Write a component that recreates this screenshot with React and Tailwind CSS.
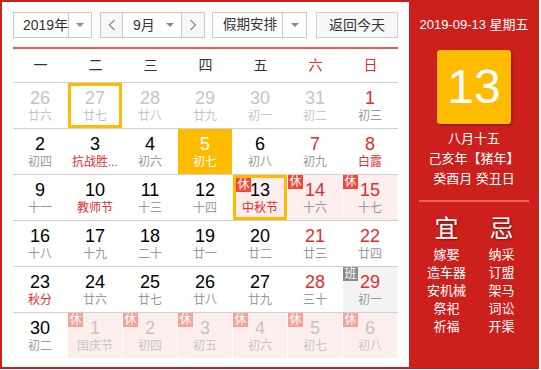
import React from "react"

const weeks = ["一", "二", "三", "四", "五", "六", "日"]

// other = prev/next month, rest = 休, work = 班
const rows = [
  [
    { d: 26, l: "廿六", other: true },
    { d: 27, l: "廿七", other: true, hover: true },
    { d: 28, l: "廿八", other: true },
    { d: 29, l: "廿九", other: true },
    { d: 30, l: "初一", other: true },
    { d: 31, l: "初二", other: true },
    { d: 1, l: "初三" },
  ],
  [
    { d: 2, l: "初四" },
    { d: 3, l: "抗战胜...", fest: true },
    { d: 4, l: "初六" },
    { d: 5, l: "初七", today: true },
    { d: 6, l: "初八" },
    { d: 7, l: "初九" },
    { d: 8, l: "白露", fest: true },
  ],
  [
    { d: 9, l: "十一" },
    { d: 10, l: "教师节", fest: true },
    { d: 11, l: "十三" },
    { d: 12, l: "十四" },
    { d: 13, l: "中秋节", fest: true, rest: true, selected: true, black: true },
    { d: 14, l: "十六", rest: true },
    { d: 15, l: "十七", rest: true },
  ],
  [
    { d: 16, l: "十八" },
    { d: 17, l: "十九" },
    { d: 18, l: "二十" },
    { d: 19, l: "廿一" },
    { d: 20, l: "廿二" },
    { d: 21, l: "廿三" },
    { d: 22, l: "廿四" },
  ],
  [
    { d: 23, l: "秋分", fest: true },
    { d: 24, l: "廿六" },
    { d: 25, l: "廿七" },
    { d: 26, l: "廿八" },
    { d: 27, l: "廿九" },
    { d: 28, l: "三十" },
    { d: 29, l: "初一", work: true },
  ],
  [
    { d: 30, l: "初二" },
    { d: 1, l: "国庆节", other: true, rest: true },
    { d: 2, l: "初四", other: true, rest: true },
    { d: 3, l: "初五", other: true, rest: true },
    { d: 4, l: "初六", other: true, rest: true },
    { d: 5, l: "初七", other: true, rest: true },
    { d: 6, l: "初八", other: true, rest: true },
  ],
]

const yi = ["嫁娶", "造车器", "安机械", "祭祀", "祈福"]
const ji = ["纳采", "订盟", "架马", "词讼", "开渠"]

function Caret() {
  return <span className="w-0 h-0 border-x-[4px] border-t-[4px] border-x-transparent border-t-[#8a8a8a]" />
}

function Chevron({ dir }) {
  return (
    <svg width="8" height="12" viewBox="0 0 8 12">
      <polyline
        points={dir === "left" ? "6.5,1 1.5,6 6.5,11" : "1.5,1 6.5,6 1.5,11"}
        fill="none"
        stroke="#8a8a8a"
        strokeWidth="1.2"
      />
    </svg>
  )
}

function Cell({ c, col }) {
  const weekend = col >= 5
  let bg = ""
  if (c.today) bg = "bg-[#ffbb00]"
  else if (c.rest) bg = "bg-[#fdeeee]"
  else if (c.work) bg = "bg-[#f3f3f3]"

  let num = "text-black"
  let lunar = "text-[#999]"
  if (c.other) {
    num = "text-[#c4c4c4]"
    lunar = "text-[#c4c4c4]"
  } else if (c.today) {
    num = "text-white"
    lunar = "text-white"
  } else {
    if (weekend) num = "text-[#e12d2d]"
    if (c.fest) lunar = "text-[#e12d2d]"
  }
  if (c.black) num = "text-black"

  const border = c.selected || c.hover ? "border-[3px] border-[#ffbb00] pt-[2px]" : "pt-[5px]"

  return (
    <div className={`relative w-[54px] h-[45px] mr-[1px] flex flex-col items-center ${bg} ${border}`}>
      {c.rest && (
        <span
          className={`absolute top-0 left-0 w-[15px] h-[14px] text-[12px] leading-[14px] text-center text-white ${
            c.other ? "bg-[#f9a098]" : "bg-[#f4473b]"
          }`}
        >
          休
        </span>
      )}
      {c.work && (
        <span className="absolute top-0 left-0 w-[15px] h-[14px] text-[12px] leading-[14px] text-center text-white bg-[#8c8c8c]">
          班
        </span>
      )}
      <span className={`text-[18px] leading-[20px] ${num}`}>{c.d}</span>
      <span className={`text-[12px] leading-[16px] whitespace-nowrap ${lunar}`}>{c.l}</span>
    </div>
  )
}

export default function App() {
  return (
    <div className="w-[539px] h-[369px] bg-[#cc201c] flex font-['Liberation_Sans','Noto_Sans_CJK_SC',sans-serif]">
      {/* left: month grid */}
      <div className="w-[407px] h-[365px] mt-[2px] ml-[2px] bg-white pl-[11px] pt-[10px]">
        <div className="flex items-center h-[26px] text-[14px] text-[#333] whitespace-nowrap">
          <div className="flex w-[79px] h-[26px] border border-[#c8c8c8] bg-white">
            <div className="flex-1 flex items-center pl-[9px]">2019年</div>
            <div className="w-[23px] shrink-0 flex items-center justify-center border-l border-[#c8c8c8]">
              <Caret />
            </div>
          </div>
          <div className="flex w-[105px] h-[26px] ml-[8px] border border-[#c8c8c8]">
            <div className="w-[22px] flex items-center justify-center bg-[#f7f7f7] border-r border-[#c8c8c8]">
              <Chevron dir="left" />
            </div>
            <div className="flex-1 flex items-center justify-between pl-[10px] pr-[7px] bg-white">
              <span>9月</span>
              <Caret />
            </div>
            <div className="w-[23px] flex items-center justify-center bg-[#f7f7f7] border-l border-[#c8c8c8]">
              <Chevron dir="right" />
            </div>
          </div>
          <div className="flex w-[95px] h-[26px] ml-[7px] border border-[#c8c8c8] bg-white">
            <div className="flex-1 flex items-center pl-[10px] text-[13.5px]">假期安排</div>
            <div className="w-[24px] shrink-0 flex items-center justify-center border-l border-[#c8c8c8]">
              <Caret />
            </div>
          </div>
          <div className="w-[82px] h-[26px] ml-[9px] border border-[#d0d0d0] bg-[#f7f7f7] flex items-center justify-center">
            返回今天
          </div>
        </div>

        <div className="w-[385px] h-[2px] mt-[9px] bg-[#f0564c]" />

        <div className="flex h-[33px] items-center text-[14px]">
          {weeks.map((w, i) => (
            <div key={w} className={`w-[55px] text-center ${i >= 5 ? "text-[#e12d2d]" : "text-[#333]"}`}>
              {w}
            </div>
          ))}
        </div>

        {rows.map((r, ri) => (
          <div key={ri} className="flex w-[385px] border-t border-[#d0d0d0]">
            {r.map((c, ci) => (
              <Cell key={ci} c={c} col={ci} />
            ))}
          </div>
        ))}
      </div>

      {/* right: selected day */}
      <div className="flex-1 flex flex-col items-center text-white pt-[16px]">
        <div className="text-[13px] leading-[18px]">2019-09-13 星期五</div>
        <div className="w-[74px] h-[74px] mt-[16px] rounded-[3px] bg-[#ffbb00] shadow-[1px_1px_3px_rgba(0,0,0,0.35)] flex items-center justify-center text-[48px] leading-none">
          13
        </div>
        <div className="mt-[5px] text-[13px] leading-[20px] text-center">
          <div>八月十五</div>
          <div>己亥年【猪年】</div>
          <div>癸酉月 癸丑日</div>
        </div>
        <div className="w-[110px] h-[2px] mt-[11px] bg-[#e8675d]" />
        <div className="flex w-[110px] mt-[13px]">
          <div className="w-[55px] flex flex-col items-center">
            <div className="text-[24px] leading-[28px] [text-shadow:1px_1px_2px_rgba(0,0,0,0.45)]">宜</div>
            <div className="mt-[3px] text-[13px] leading-[18px] text-center">
              {yi.map((t) => (
                <div key={t}>{t}</div>
              ))}
            </div>
          </div>
          <div className="w-[55px] flex flex-col items-center">
            <div className="text-[24px] leading-[28px] [text-shadow:1px_1px_2px_rgba(0,0,0,0.45)]">忌</div>
            <div className="mt-[3px] text-[13px] leading-[18px] text-center">
              {ji.map((t) => (
                <div key={t}>{t}</div>
              ))}
            </div>
          </div>
        </div>
      </div>
    </div>
  )
}
